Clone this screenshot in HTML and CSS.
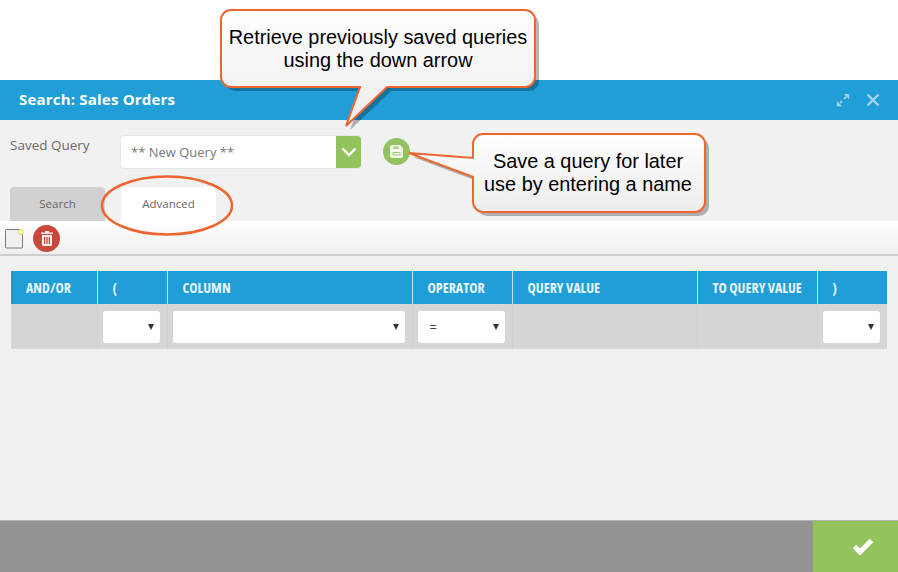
FILE: index.html
```html
<!DOCTYPE html>
<html lang="en">
<head>
<meta charset="UTF-8" />
<title>Search: Sales Orders</title>
<link rel="stylesheet" href="styles.css">
</head>
<body>
<div class="top-space"></div>
<div class="dialog">
  <div class="dialog-header">
    <div class="dialog-title">Search: Sales Orders</div>
    <div class="dialog-actions">
      <svg width="14" height="14" viewBox="0 0 16 16"><path d="M9 1H15V7ZM1 9V15H7Z" fill="#a8d4ef"/><path d="M11.500 4.500L9.200 6.800M4.500 11.500L6.800 9.200" stroke="#a8d4ef" stroke-width="2.200" fill="none"/></svg>
      <svg width="14" height="14" viewBox="0 0 14 14"><path d="M1.500 1.500l11 11M12.500 1.500l-11 11" stroke="#a8d4ef" stroke-width="2.400" fill="none"/></svg>
    </div>
  </div>
  <div class="dialog-body">
    <div class="query-row">
      <label class="query-label">Saved Query</label>
      <div class="query-select">
        <span class="query-value">** New Query **</span>
        <span class="query-arrow">
          <svg width="16" height="10" viewBox="0 0 16 10"><path d="M1.500 1.500L8 8l6.500-6.500" stroke="#fff" stroke-width="2.400" fill="none"/></svg>
        </span>
      </div>
      <button class="round-btn btn-save" aria-label="Save query">
        <svg width="13" height="13" viewBox="0 0 13 13"><path d="M2 0h8L13 3v8a2 2 0 0 1-2 2H2a2 2 0 0 1-2-2V2a2 2 0 0 1 2-2z" fill="#f1f7ea"/><rect x="3.500" y="1.500" width="5" height="2.500" fill="#a9cf80"/><rect x="2.500" y="7" width="8" height="3.500" fill="#a9cf80"/><rect x="3.500" y="8" width="6" height="1.500" fill="#f1f7ea"/></svg>
      </button>
    </div>
    <div class="tabs">
      <div class="tab tab-search">Search</div>
      <div class="tab tab-advanced">Advanced</div>
    </div>
    <div class="toolbar">
      <svg class="note-icon" width="20" height="21" viewBox="0 0 20 21"><rect x="1.500" y="1.500" width="17" height="18.500" rx="1" fill="#f1f1ef" stroke="#77797b"/><circle cx="16.800" cy="4" r="2.400" fill="#fffbe0" stroke="#f2e36c" stroke-width="1.200"/></svg>
      <button class="round-btn btn-delete" aria-label="Delete">
        <svg width="12" height="15" viewBox="0 0 12 15"><path d="M4 0h4v1.500h4V3H0V1.500h4zM1 4h10v9.500a1.500 1.500 0 0 1-1.500 1.500h-7A1.500 1.500 0 0 1 1 13.500zM3 6v7h1.300V6zm2.350 0v7h1.300V6zM7.700 6v7H9V6z" fill="#fbeeee" fill-rule="evenodd"/></svg>
      </button>
    </div>
    <table class="query-table">
      <colgroup>
        <col class="col-andor"><col class="col-open"><col class="col-column"><col class="col-operator"><col class="col-value"><col class="col-to"><col>
      </colgroup>
      <thead>
        <tr>
          <th>AND/OR</th><th>(</th><th>COLUMN</th><th>OPERATOR</th><th>QUERY VALUE</th><th>TO QUERY VALUE</th><th>)</th>
        </tr>
      </thead>
      <tbody>
        <tr>
          <td></td>
          <td><div class="cell-select"></div></td>
          <td><div class="cell-select"></div></td>
          <td><div class="cell-select">=</div></td>
          <td></td>
          <td></td>
          <td><div class="cell-select"></div></td>
        </tr>
      </tbody>
    </table>
  </div>
  <div class="dialog-footer">
    <button class="btn-ok" aria-label="OK">
      <svg width="22" height="17" viewBox="0 0 22 17"><path d="M2.500 8.500L8 14 19.500 2.500" stroke="#fff" stroke-width="5" fill="none"/></svg>
    </button>
  </div>
</div>

<!-- annotations drawn over the screenshot -->
<svg class="notes" width="898" height="572" viewBox="0 0 898 572">
  <defs>
    <linearGradient id="noteFill" x1="0" y1="0" x2="0" y2="1">
      <stop offset="0" stop-color="#ffffff"/>
      <stop offset="1" stop-color="#ececec"/>
    </linearGradient>
  </defs>
  <path d="M231 10H525a10 10 0 0 1 10 10V77a10 10 0 0 1-10 10H387L346 126 360 87H231a10 10 0 0 1-10-10V20a10 10 0 0 1 10-10z" fill="#000" opacity=".28" transform="translate(4 4)"/>
  <path d="M231 10H525a10 10 0 0 1 10 10V77a10 10 0 0 1-10 10H387L346 126 360 87H231a10 10 0 0 1-10-10V20a10 10 0 0 1 10-10z" fill="url(#noteFill)" stroke="#ef6530" stroke-width="2"/>
  <path d="M483 134H695a10 10 0 0 1 10 10V202a10 10 0 0 1-10 10H483a10 10 0 0 1-10-10V177L409 153 473 158V144a10 10 0 0 1 10-10z" fill="#000" opacity=".28" transform="translate(4 4)"/>
  <path d="M483 134H695a10 10 0 0 1 10 10V202a10 10 0 0 1-10 10H483a10 10 0 0 1-10-10V177L409 153 473 158V144a10 10 0 0 1 10-10z" fill="url(#noteFill)" stroke="#ef6530" stroke-width="2"/>
  <ellipse cx="167" cy="205.500" rx="65" ry="29" fill="none" stroke="#ef6530" stroke-width="2.500"/>
</svg>
<div class="note-text note-retrieve">Retrieve previously saved queries<br>using the down arrow</div>
<div class="note-text note-save">Save a query for later<br>use by entering a name</div>
</body>
</html>
```

FILE: styles.css
```css
* {
  box-sizing: border-box;
}
html, body {
  height: 572px;
  overflow: hidden;
}
body {
  margin: 0;
  position: relative;
  background-color: #fff;
  font-family: 'Open Sans', Lato, sans-serif;
  color: #666;
}
button {
  border: none;
  padding: 0;
  cursor: pointer;
}
.top-space {
  height: 80px;
}
.dialog {
  height: 492px;
  display: flex;
  flex-direction: column;
  background-color: #f1f1f1;
}
.dialog-header {
  height: 40px;
  flex: none;
  padding: 0 19px;
  display: flex;
  align-items: center;
  justify-content: space-between;
  background-color: #209ed8;
}
.dialog-title {
  margin-top: -2px;
  font-size: 15px;
  font-weight: 700;
  letter-spacing: 0.2px;
  color: #fff;
}
.dialog-actions {
  display: flex;
  align-items: center;
  gap: 16px;
  margin-right: -1px;
}
.dialog-body {
  flex: 1;
}
.query-row {
  display: flex;
  align-items: flex-start;
  height: 67px;
  padding: 15px 0 0 10px;
}
.query-label {
  width: 110px;
  font-size: 13.500px;
  line-height: 20px;
  color: #6a6a6a;
}
.query-select {
  width: 241px;
  height: 34px;
  display: flex;
  align-items: center;
  justify-content: space-between;
  background-color: #fff;
  border: 1px solid #e6e6e6;
  border-right: none;
  border-radius: 4px;
  overflow: hidden;
}
.query-value {
  padding-left: 10px;
  font-size: 13px;
  color: #777;
}
.query-arrow {
  width: 25px;
  height: 100%;
  display: flex;
  align-items: center;
  justify-content: center;
  background-color: #92c35f;
}
.round-btn {
  width: 27px;
  height: 27px;
  flex: none;
  border-radius: 50%;
  display: flex;
  align-items: center;
  justify-content: center;
}
.btn-save {
  margin: 3px 0 0 22px;
  background-color: #92c35f;
}
.btn-delete {
  background-color: #c9483b;
}
.tabs {
  display: flex;
  gap: 16px;
  padding-left: 10px;
}
.tab {
  width: 95px;
  height: 34px;
  padding-bottom: 2px;
  display: flex;
  align-items: center;
  justify-content: center;
  font-size: 11.500px;
  color: #666;
  border-radius: 4px 4px 0 0;
}
.tab-search {
  background-color: #d0d1d3;
}
.tab-advanced {
  background-color: #fff;
}
.toolbar {
  height: 35px;
  padding: 2px 0 0 4px;
  display: flex;
  align-items: center;
  gap: 9px;
  background: linear-gradient(to bottom, #fff 0%, #efefef 100%);
  border-bottom: 2px solid #cfcfcf;
}
.query-table {
  width: 876px;
  margin: 15px 0 0 11px;
  border-collapse: collapse;
  table-layout: fixed;
}
.col-andor { width: 86px; }
.col-open { width: 70px; }
.col-column { width: 245px; }
.col-operator { width: 100px; }
.col-value { width: 185px; }
.col-to { width: 120px; }
.query-table th {
  height: 33px;
  padding: 0 0 0 15px;
  background-color: #209ed8;
  border-left: 1px solid #cde6f3;
  font-family: 'Open Sans', Roboto, sans-serif;
  font-stretch: 75%;
  font-size: 14px;
  font-weight: 700;
  color: #e8f5fc;
  text-align: left;
  white-space: nowrap;
}
.query-table th:first-child {
  border-left: none;
}
.query-table td {
  height: 45px;
  padding: 0 7px 0 5px;
  background-color: #d6d6d6;
  border-left: 1px solid #cfcfcf;
}
.query-table td:first-child {
  border-left: none;
}
.cell-select {
  position: relative;
  height: 32px;
  padding-left: 12px;
  background-color: #fff;
  border-radius: 3px;
  font-size: 13px;
  line-height: 32px;
  color: #444;
}
.cell-select::after {
  content: "";
  position: absolute;
  right: 6px;
  top: 13px;
  border-left: 3px solid transparent;
  border-right: 3px solid transparent;
  border-top: 6px solid #333;
}
.dialog-footer {
  height: 52px;
  flex: none;
  display: flex;
  justify-content: flex-end;
  background-color: #939393;
  border-top: 1px solid #b5b5b5;
}
.btn-ok {
  width: 85px;
  padding-left: 15px;
  display: flex;
  align-items: center;
  justify-content: center;
  background-color: #92c35f;
}
/* annotations */
.notes {
  position: absolute;
  left: 0;
  top: 0;
}
.note-text {
  position: absolute;
  font-family: 'Liberation Sans', Arial, sans-serif;
  font-size: 19.900px;
  line-height: 23px;
  color: #000;
  text-align: center;
  white-space: nowrap;
}
.note-retrieve {
  left: 221px;
  top: 26px;
  width: 314px;
}
.note-save {
  left: 472px;
  top: 150px;
  width: 232px;
}
```
